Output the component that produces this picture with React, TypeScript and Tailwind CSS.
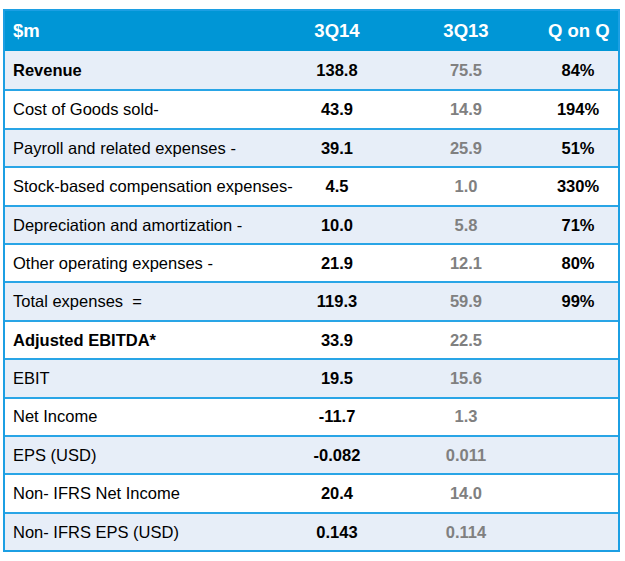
type Row = {
  label: string;
  bold?: boolean;
  cur: string;
  prev: string;
  qoq?: string;
};

const ROWS: Row[] = [
  { label: "Revenue", bold: true, cur: "138.8", prev: "75.5", qoq: "84%" },
  { label: "Cost of Goods sold-", cur: "43.9", prev: "14.9", qoq: "194%" },
  { label: "Payroll and related expenses -", cur: "39.1", prev: "25.9", qoq: "51%" },
  { label: "Stock-based compensation expenses-", cur: "4.5", prev: "1.0", qoq: "330%" },
  { label: "Depreciation and amortization -", cur: "10.0", prev: "5.8", qoq: "71%" },
  { label: "Other operating expenses -", cur: "21.9", prev: "12.1", qoq: "80%" },
  { label: "Total expenses  =", cur: "119.3", prev: "59.9", qoq: "99%" },
  { label: "Adjusted EBITDA*", bold: true, cur: "33.9", prev: "22.5" },
  { label: "EBIT", cur: "19.5", prev: "15.6" },
  { label: "Net Income", cur: "-11.7", prev: "1.3" },
  { label: "EPS (USD)", cur: "-0.082", prev: "0.011" },
  { label: "Non- IFRS Net Income", cur: "20.4", prev: "14.0" },
  { label: "Non- IFRS EPS (USD)", cur: "0.143", prev: "0.114" },
];

/** Column template shared by the header and the body rows. */
const COLS = "grid grid-cols-[285px_94px_164px_1fr] items-center";

export default function App() {
  return (
    <div
      className="w-[625px] h-[561px] bg-white pt-[9px] pl-[3px]"
      style={{ fontFamily: '"Liberation Sans", Arial, sans-serif' }}
    >
      <div className="w-[617px] border-2 border-[#1c9fe3] text-[16.5px] leading-none">
        <div className={`${COLS} h-[40px] bg-[#0096d6] text-white font-bold text-[18.5px]`}>
          <div className="pl-[8px]">$m</div>
          <div className="text-center">3Q14</div>
          <div className="text-center">3Q13</div>
          <div className="text-center whitespace-nowrap pr-[10px]">Q on Q</div>
        </div>
        {ROWS.map((r, i) => (
          <div
            key={r.label}
            className={`${COLS} h-[38.4px] ${i > 0 ? "border-t-2 border-[#29a5e6]" : ""} ${
              i % 2 === 0 ? "bg-[#e7eef8]" : "bg-white"
            }`}
          >
            <div className={`pl-[8px] text-black whitespace-pre ${r.bold ? "font-bold" : ""}`}>{r.label}</div>
            <div className="text-center font-bold text-black">{r.cur}</div>
            <div className="text-center font-bold text-[#808080]">{r.prev}</div>
            <div className="text-center font-bold text-black pr-[10px]">{r.qoq ?? ""}</div>
          </div>
        ))}
      </div>
    </div>
  );
}
